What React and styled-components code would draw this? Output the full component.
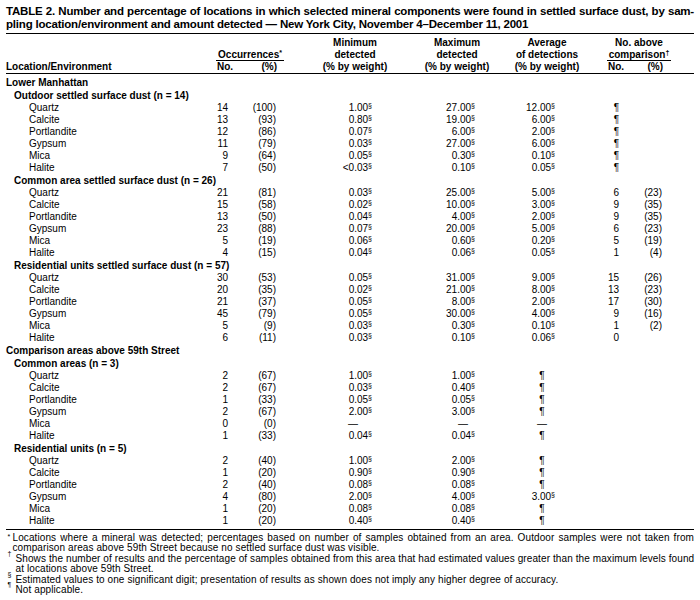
import React from 'react';
import styled, { createGlobalStyle } from 'styled-components';

const GlobalStyle = createGlobalStyle`
  body {
    margin: 0;
    background: #fff;
  }
`;

// body columns: location | No. | (%) | min | max | avg | No. | (%) | rest
const COLS = '194px 28px 48px 96px 103px 80px 64px 43px 1fr';

const rows = [
  { type: 'sec', label: 'Lower Manhattan' },
  { type: 'sub', label: 'Outdoor settled surface dust (n = 14)' },
  { label: 'Quartz', no: '14', pct: '(100)', min: '1.00', max: '27.00', avg: '12.00', aNo: '¶' },
  { label: 'Calcite', no: '13', pct: '(93)', min: '0.80', max: '19.00', avg: '6.00', aNo: '¶' },
  { label: 'Portlandite', no: '12', pct: '(86)', min: '0.07', max: '6.00', avg: '2.00', aNo: '¶' },
  { label: 'Gypsum', no: '11', pct: '(79)', min: '0.03', max: '27.00', avg: '6.00', aNo: '¶' },
  { label: 'Mica', no: '9', pct: '(64)', min: '0.05', max: '0.30', avg: '0.10', aNo: '¶' },
  { label: 'Halite', no: '7', pct: '(50)', min: '<0.03', max: '0.10', avg: '0.05', aNo: '¶' },
  { type: 'sub', label: 'Common area settled surface dust (n = 26)' },
  { label: 'Quartz', no: '21', pct: '(81)', min: '0.03', max: '25.00', avg: '5.00', aNo: '6', aPct: '(23)' },
  { label: 'Calcite', no: '15', pct: '(58)', min: '0.02', max: '10.00', avg: '3.00', aNo: '9', aPct: '(35)' },
  { label: 'Portlandite', no: '13', pct: '(50)', min: '0.04', max: '4.00', avg: '2.00', aNo: '9', aPct: '(35)' },
  { label: 'Gypsum', no: '23', pct: '(88)', min: '0.07', max: '20.00', avg: '5.00', aNo: '6', aPct: '(23)' },
  { label: 'Mica', no: '5', pct: '(19)', min: '0.06', max: '0.60', avg: '0.20', aNo: '5', aPct: '(19)' },
  { label: 'Halite', no: '4', pct: '(15)', min: '0.04', max: '0.06', avg: '0.05', aNo: '1', aPct: '(4)' },
  { type: 'sub', label: 'Residential units settled surface dust (n = 57)' },
  { label: 'Quartz', no: '30', pct: '(53)', min: '0.05', max: '31.00', avg: '9.00', aNo: '15', aPct: '(26)' },
  { label: 'Calcite', no: '20', pct: '(35)', min: '0.02', max: '21.00', avg: '8.00', aNo: '13', aPct: '(23)' },
  { label: 'Portlandite', no: '21', pct: '(37)', min: '0.05', max: '8.00', avg: '2.00', aNo: '17', aPct: '(30)' },
  { label: 'Gypsum', no: '45', pct: '(79)', min: '0.05', max: '30.00', avg: '4.00', aNo: '9', aPct: '(16)' },
  { label: 'Mica', no: '5', pct: '(9)', min: '0.03', max: '0.30', avg: '0.10', aNo: '1', aPct: '(2)' },
  { label: 'Halite', no: '6', pct: '(11)', min: '0.03', max: '0.10', avg: '0.06', aNo: '0' },
  { type: 'sec', label: 'Comparison areas above 59th Street' },
  { type: 'sub', label: 'Common areas (n = 3)' },
  { label: 'Quartz', no: '2', pct: '(67)', min: '1.00', max: '1.00', avg: '¶' },
  { label: 'Calcite', no: '2', pct: '(67)', min: '0.03', max: '0.40', avg: '¶' },
  { label: 'Portlandite', no: '1', pct: '(33)', min: '0.05', max: '0.05', avg: '¶' },
  { label: 'Gypsum', no: '2', pct: '(67)', min: '2.00', max: '3.00', avg: '¶' },
  { label: 'Mica', no: '0', pct: '(0)', min: '—', max: '—', avg: '—' },
  { label: 'Halite', no: '1', pct: '(33)', min: '0.04', max: '0.04', avg: '¶' },
  { type: 'sub', label: 'Residential units (n = 5)' },
  { label: 'Quartz', no: '2', pct: '(40)', min: '1.00', max: '2.00', avg: '¶' },
  { label: 'Calcite', no: '1', pct: '(20)', min: '0.90', max: '0.90', avg: '¶' },
  { label: 'Portlandite', no: '2', pct: '(40)', min: '0.08', max: '0.08', avg: '¶' },
  { label: 'Gypsum', no: '4', pct: '(80)', min: '2.00', max: '4.00', avg: '3.00' },
  { label: 'Mica', no: '1', pct: '(20)', min: '0.08', max: '0.08', avg: '¶' },
  { label: 'Halite', no: '1', pct: '(20)', min: '0.40', max: '0.40', avg: '¶' },
];

const Page = styled.div`
  width: 688px;
  padding: 5px 6px 0;
  font-family: "Liberation Sans", Arial, sans-serif;
  color: #000;
`;

const Title = styled.div`
  font-family: "Liberation Sans", Arial, sans-serif;
  font-weight: bold;
  font-size: 11.5px;
  letter-spacing: -0.2px;
  line-height: 13px;
  padding-bottom: 2px;
  border-bottom: 1.5px solid #000;
`;

const TitleLine = styled.div`
  white-space: nowrap;
  text-align: ${(p) => (p.$justify ? 'justify' : 'left')};
  text-align-last: ${(p) => (p.$justify ? 'justify' : 'auto')};
`;

const Head = styled.div`
  display: grid;
  grid-template-columns: 194px 100px 110px 94px 86px 98px 1fr;
  grid-template-rows: repeat(3, 12px);
  margin-top: 2.5px;
  border-bottom: 1.5px solid #000;
  font-size: 10px;
  line-height: 12px;
  font-weight: bold;
`;

const HeadCell = styled.div`
  grid-column: ${(p) => p.$col};
  grid-row: ${(p) => p.$row};
  text-align: ${(p) => (p.$left ? 'left' : 'center')};
  white-space: nowrap;
`;

const Rule = styled.span`
  display: inline-block;
  line-height: 10px;
  padding: 0 2px;
  border-bottom: 1px solid #000;
`;

const SubHeads = styled.div`
  display: flex;
  justify-content: space-between;
  padding: ${(p) => p.$pad};
`;

const Body = styled.div`
  padding-top: 3px;
  padding-bottom: 2px;
  border-bottom: 1px solid #000;
`;

const Row = styled.div`
  display: grid;
  grid-template-columns: ${COLS};
  height: 12px;
  line-height: 12px;
  font-size: 10px;
  margin-top: ${(p) => (p.$gap ? '1px' : '0')};
`;

const Label = styled.div`
  grid-column: ${(p) => (p.$span ? '1 / -1' : 'auto')};
  padding-left: ${(p) => p.$indent}px;
  font-weight: ${(p) => (p.$bold ? 'bold' : 'normal')};
  white-space: nowrap;
`;

const Num = styled.div`
  text-align: right;
  white-space: nowrap;
`;

const Sup = styled.sup`
  font-size: 7px;
  line-height: 0;
  vertical-align: 3px;
`;

const Mark = styled.span`
  display: inline-block;
  width: ${(p) => p.$w}px;
  text-align: center;
`;

const Notes = styled.div`
  padding-top: 3px;
  font-size: 10px;
  letter-spacing: 0.1px;
  line-height: 10.5px;
`;

const Note = styled.div`
  display: flex;
`;

const Marker = styled.div`
  flex: 0 0 8px;
  padding-left: 1.5px;
  font-size: 7px;
  line-height: 8px;
  margin-top: ${(p) => (p.$first ? '0' : '-4px')};
`;

const NoteText = styled.div`
  flex: 1;
  min-width: 0;
  text-indent: ${(p) => (p.$out ? '-3px' : '0')};
`;

const NoteLine = styled.div`
  white-space: nowrap;
  text-align: ${(p) => (p.$full ? 'justify' : 'left')};
  text-align-last: ${(p) => (p.$full ? 'justify' : 'auto')};
`;

function Value({ v, w }) {
  if (!v) return null;
  if (v === '¶' || v === '—') return <Mark $w={w}>{v}</Mark>;
  return (
    <>
      {v}
      <Sup>§</Sup>
    </>
  );
}

function TableRow({ r, first }) {
  if (r.type === 'sec' || r.type === 'sub') {
    return (
      <Row $gap={!first}>
        <Label $span $bold $indent={r.type === 'sec' ? 0 : 8}>
          {r.label}
        </Label>
      </Row>
    );
  }
  return (
    <Row>
      <Label $indent={23}>{r.label}</Label>
      <Num>{r.no}</Num>
      <Num>{r.pct}</Num>
      <Num><Value v={r.min} w={38} /></Num>
      <Num><Value v={r.max} w={24} /></Num>
      <Num><Value v={r.avg} w={26} /></Num>
      <Num>{r.aNo}</Num>
      <Num>{r.aPct}</Num>
      <div />
    </Row>
  );
}

export default function App() {
  return (
    <Page>
      <GlobalStyle />
      <Title>
        <TitleLine $justify>
          TABLE 2. Number and percentage of locations in which selected mineral components were found in settled surface dust, by sam-
        </TitleLine>
        <TitleLine>
          pling location/environment and amount detected — New York City, November 4–December 11, 2001
        </TitleLine>
      </Title>

      <Head>
        <HeadCell $col="1" $row="3" $left>Location/Environment</HeadCell>
        <HeadCell $col="2" $row="2"><Rule>Occurrences<Sup>*</Sup></Rule></HeadCell>
        <HeadCell $col="2" $row="3">
          <SubHeads $pad="0 23px 0 17px"><span>No.</span><span>(%)</span></SubHeads>
        </HeadCell>
        <HeadCell $col="3" $row="1 / 4">Minimum<br />detected<br />(% by weight)</HeadCell>
        <HeadCell $col="4" $row="1 / 4">Maximum<br />detected<br />(% by weight)</HeadCell>
        <HeadCell $col="5" $row="1 / 4">Average<br />of detections<br />(% by weight)</HeadCell>
        <HeadCell $col="6" $row="1">No. above</HeadCell>
        <HeadCell $col="6" $row="2"><Rule>comparison<Sup>†</Sup></Rule></HeadCell>
        <HeadCell $col="6" $row="3">
          <SubHeads $pad="0 25px 0 18px"><span>No.</span><span>(%)</span></SubHeads>
        </HeadCell>
      </Head>

      <Body>
        {rows.map((r, i) => (
          <TableRow key={i} r={r} first={i === 0} />
        ))}
      </Body>

      <Notes>
        <Note>
          <Marker $first>*</Marker>
          <NoteText $out>
            <NoteLine $full>
              Locations where a mineral was detected; percentages based on number of samples obtained from an area. Outdoor samples were not taken from
            </NoteLine>
            <NoteLine>comparison areas above 59th Street because no settled surface dust was visible.</NoteLine>
          </NoteText>
        </Note>
        <Note>
          <Marker>†</Marker>
          <NoteText>
            <NoteLine $full>
              Shows the number of results and the percentage of samples obtained from this area that had estimated values greater than the maximum levels found
            </NoteLine>
            <NoteLine>at locations above 59th Street.</NoteLine>
          </NoteText>
        </Note>
        <Note>
          <Marker>§</Marker>
          <NoteText>
            <NoteLine>
              Estimated values to one significant digit; presentation of results as shown does not imply any higher degree of accuracy.
            </NoteLine>
          </NoteText>
        </Note>
        <Note>
          <Marker>¶</Marker>
          <NoteText>
            <NoteLine>Not applicable.</NoteLine>
          </NoteText>
        </Note>
      </Notes>
    </Page>
  );
}
